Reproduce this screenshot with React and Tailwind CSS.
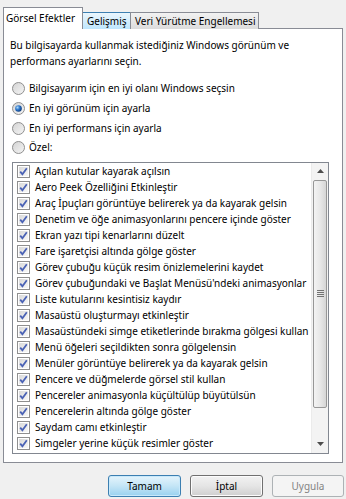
const items = [
  "Açılan kutular kayarak açılsın",
  "Aero Peek Özelliğini Etkinleştir",
  "Araç İpuçları görüntüye belirerek ya da kayarak gelsin",
  "Denetim ve öğe animasyonlarını pencere içinde göster",
  "Ekran yazı tipi kenarlarını düzelt",
  "Fare işaretçisi altında gölge göster",
  "Görev çubuğu küçük resim önizlemelerini kaydet",
  "Görev çubuğundaki ve Başlat Menüsü'ndeki animasyonlar",
  "Liste kutularını kesintisiz kaydır",
  "Masaüstü oluşturmayı etkinleştir",
  "Masaüstündeki simge etiketlerinde bırakma gölgesi kullan",
  "Menü öğeleri seçildikten sonra gölgelensin",
  "Menüler görüntüye belirerek ya da kayarak gelsin",
  "Pencere ve düğmelerde görsel stil kullan",
  "Pencereler animasyonla küçültülüp büyütülsün",
  "Pencerelerin altında gölge göster",
  "Saydam camı etkinleştir",
  "Simgeler yerine küçük resimler göster",
];

const radios = [
  ["Bilgisayarım için en iyi olanı Windows seçsin", false],
  ["En iyi görünüm için ayarla", true],
  ["En iyi performans için ayarla", false],
  ["Özel:", false],
];

function Radio({ checked }) {
  return (
    <svg width="13" height="13" viewBox="0 0 13 13" className="shrink-0">
      <defs>
        <linearGradient id="rb" x1="0" y1="0" x2="1" y2="1">
          <stop offset="0" stopColor="#d2d2d2" />
          <stop offset="1" stopColor="#f6f6f6" />
        </linearGradient>
        <radialGradient id="rd" cx="0.35" cy="0.35" r="0.7">
          <stop offset="0" stopColor="#a9d8f8" />
          <stop offset="0.5" stopColor="#2a73c8" />
          <stop offset="1" stopColor="#0e3a7a" />
        </radialGradient>
      </defs>
      <circle cx="6.5" cy="6.5" r="6" fill="url(#rb)" stroke="#8f8f8f" />
      {checked && <circle cx="6.5" cy="6.5" r="3.3" fill="url(#rd)" />}
    </svg>
  );
}

function Check() {
  return (
    <svg width="13" height="13" viewBox="0 0 13 13" className="shrink-0">
      <defs>
        <linearGradient id="cb" x1="0" y1="0" x2="1" y2="1">
          <stop offset="0" stopColor="#d9d9d9" />
          <stop offset="1" stopColor="#f8f8f8" />
        </linearGradient>
      </defs>
      <rect x="0.5" y="0.5" width="12" height="12" fill="#fff" stroke="#8f8f8f" />
      <rect x="2" y="2" width="9" height="9" fill="url(#cb)" />
      <path d="M3.2 6.6 L5.4 9.2 L9.8 3.2" fill="none" stroke="#4a62b5" strokeWidth="1.8" />
    </svg>
  );
}

function ScrollBar() {
  return (
    <div className="w-[17px] h-full shrink-0 flex flex-col bg-[#f3f3f3] border-l border-[#ebebeb]">
      <div className="h-[17px] flex items-center justify-center shrink-0">
        <svg width="7" height="4" viewBox="0 0 7 4">
          <path d="M0 4 L3.5 0 L7 4 Z" fill="#4d4d4d" />
        </svg>
      </div>
      <div className="mx-px h-[228px] rounded-[2px] border border-[#979797] bg-gradient-to-r from-[#f3f3f3] via-[#e8e8e8] to-[#d6d6d6] flex items-center justify-center">
        <div className="flex flex-col gap-px">
          <div className="w-[7px] h-px bg-[#737373]" />
          <div className="w-[7px] h-px bg-[#737373]" />
          <div className="w-[7px] h-px bg-[#737373]" />
          <div className="w-[7px] h-px bg-[#737373]" />
        </div>
      </div>
      <div className="flex-1" />
      <div className="h-[17px] flex items-center justify-center shrink-0">
        <svg width="7" height="4" viewBox="0 0 7 4">
          <path d="M0 0 L3.5 4 L7 0 Z" fill="#4d4d4d" />
        </svg>
      </div>
    </div>
  );
}

export default function App() {
  return (
    <div className="w-[346px] h-[499px] bg-[#f0f0f0] text-black font-['Noto_Sans',sans-serif] text-[10px] leading-[15px] overflow-hidden">
      {/* tabs */}
      <div className="flex items-end pt-[7px] pl-[3px] h-[29px] whitespace-nowrap">
        <div className="relative z-10 h-[22px] pl-[2px] pt-[3px] bg-white border border-b-0 border-[#898c95] w-[80px]">
          Görsel Efektler
        </div>
        <div className="h-[17px] w-[49px] -ml-px border border-b-0 border-[#3c7fb1] bg-gradient-to-b from-[#eaf6fd] to-[#bee6fd] pl-[4px] pt-px">
          Gelişmiş
        </div>
        <div className="h-[17px] w-[129px] -ml-px border border-b-0 border-[#898c95] bg-gradient-to-b from-[#f2f2f2] to-[#dcdcdc] pl-[4px] pt-px">
          Veri Yürütme Engellemesi
        </div>
      </div>

      {/* panel */}
      <div className="-mt-px ml-[3px] w-[340px] h-[435px] bg-white border border-[#898c95] flex flex-col">
        <p className="pl-[6px] pt-[8px] pr-[10px] leading-[16px]">
          Bu bilgisayarda kullanmak istediğiniz Windows görünüm ve
          <br />
          performans ayarlarını seçin.
        </p>

        <div className="mt-[10px] flex flex-col pl-[8px]">
          {radios.map(([label, on], i) => (
            <div key={i} className="h-[19.7px] flex items-center gap-[4px]">
              <Radio checked={on} />
              <span>{label}</span>
            </div>
          ))}
        </div>

        <div className="mt-[4px] ml-[8px] w-[317px] h-[292px] border border-[#828790] flex">
          <div className="flex-1 min-w-0 overflow-hidden flex flex-col pt-px pl-[4px]">
            {items.map((t) => (
              <div key={t} className="h-[16px] flex items-center gap-[5px] whitespace-nowrap">
                <Check />
                <span>{t}</span>
              </div>
            ))}
          </div>
          <ScrollBar />
        </div>
      </div>

      {/* buttons */}
      <div className="flex justify-end gap-[9px] pr-[2px] mt-[12px]">
        <button className="w-[73px] h-[22px] rounded-[3px] border border-[#3c7fb1] bg-gradient-to-b from-[#e5f4fc] via-[#c4e5f6] to-[#98d1ef] shadow-[inset_0_0_0_1px_#c8e9fb] leading-[18px]">
          Tamam
        </button>
        <button className="w-[73px] h-[22px] rounded-[3px] border border-[#707070] bg-gradient-to-b from-[#f2f2f2] via-[#e5e5e5] to-[#cfcfcf] shadow-[inset_0_0_0_1px_#fcfcfc] leading-[18px]">
          İptal
        </button>
        <button className="w-[72px] h-[22px] rounded-[3px] border border-[#adb2b5] bg-[#f4f4f4] text-[#838383] leading-[18px]">
          Uygula
        </button>
      </div>
    </div>
  );
}
